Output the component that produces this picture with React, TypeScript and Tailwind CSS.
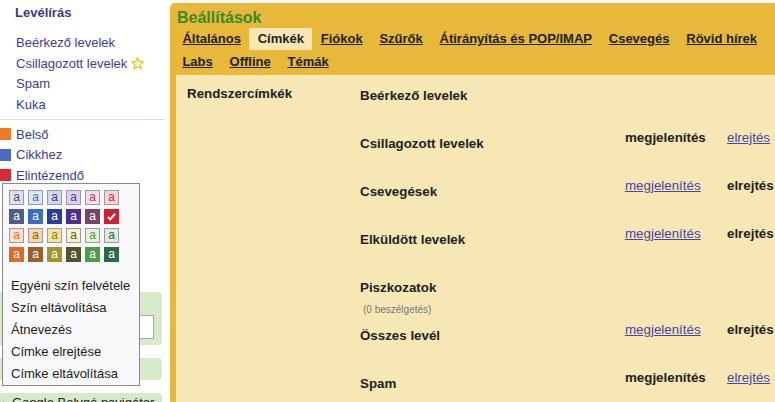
const font = "font-['Liberation_Sans',Arial,sans-serif]";

type Sw = { bg: string; fg: string; light: boolean };

const light = (bg: string, fg: string): Sw => ({ bg, fg, light: true });
const dark = (bg: string): Sw => ({ bg, fg: "#ffffff", light: false });

const palette: Sw[] = [
  light("#dee0f0", "#43509a"),
  light("#dbe6f6", "#3b6ac8"),
  light("#d4d6ee", "#2f3c98"),
  light("#ddd1ef", "#5a3a9c"),
  light("#f5dde6", "#a0405e"),
  light("#f8d6d6", "#cc2a3a"),
  dark("#4d5e8a"),
  dark("#3c6dc6"),
  dark("#2c3d98"),
  dark("#4b2f8c"),
  dark("#764563"),
  dark("#cc2233"),
  light("#fde3cf", "#e3701e"),
  light("#f7d6a9", "#8f5a22"),
  light("#f2e49f", "#8c7a1e"),
  light("#f6f2c8", "#5c5a2a"),
  light("#e3f2d6", "#4a9a3e"),
  light("#dcecd8", "#2e6444"),
  dark("#e2691f"),
  dark("#9b5f2e"),
  dark("#a69232"),
  dark("#50552e"),
  dark("#4e9c4a"),
  dark("#2b6a47"),
];

const menuItems = [
  "Egyéni szín felvétele",
  "Szín eltávolítása",
  "Átnevezés",
  "Címke elrejtése",
  "Címke eltávolítása",
];

const labels = [
  { name: "Belső", color: "#f07a28" },
  { name: "Cikkhez", color: "#4a6cc0" },
  { name: "Elintézendő", color: "#d42a3a" },
];

const tabsRow1 = [
  "Általános",
  "Címkék",
  "Fiókok",
  "Szűrők",
  "Átirányítás és POP/IMAP",
  "Csevegés",
  "Rövid hírek",
];
const tabsRow2 = ["Labs", "Offline", "Témák"];

// show: null = no options, true = shown (bold) / link to hide, false = hidden
const rows: { label: string; sub?: string; show: boolean | null }[] = [
  { label: "Beérkező levelek", show: null },
  { label: "Csillagozott levelek", show: true },
  { label: "Csevegések", show: false },
  { label: "Elküldött levelek", show: false },
  { label: "Piszkozatok", sub: "(0 beszélgetés)", show: null },
  { label: "Összes levél", show: false },
  { label: "Spam", show: true },
];

function Star() {
  return (
    <svg width="15" height="15" viewBox="0 0 24 24" className="ml-[3px] inline-block -mt-[2px]">
      <path
        d="M12 2.5l2.9 6.1 6.6.8-4.9 4.6 1.3 6.6L12 17.3l-5.9 3.3 1.3-6.6-4.9-4.6 6.6-.8z"
        fill="#fff3a0"
        stroke="#e0b020"
        strokeWidth="1.6"
        strokeLinejoin="round"
      />
    </svg>
  );
}

function Tab({ text, active }: { text: string; active?: boolean }) {
  return (
    <div
      className={
        active
          ? "shrink-0 px-[8.4px] h-[22px] leading-[22px] text-[13px] font-bold text-[#222] bg-[#f6e7b5]"
          : "shrink-0 px-[8.4px] h-[22px] leading-[22px] text-[13px] font-bold text-[#222] underline"
      }
    >
      {text}
    </div>
  );
}

function LabelMenu() {
  return (
    <div className="absolute top-[183px] left-[2px] w-[138px] bg-[#f8f8fa] border border-[#8a8a8a] z-10">
      <div className="pt-[6px] pl-[6px] grid grid-cols-[repeat(6,15px)] gap-[4px]">
        {palette.map((s, i) => (
          <div
            key={i}
            className="w-[15px] h-[15px] border flex items-center justify-center text-[12px] leading-none"
            style={{ background: s.bg, color: s.fg, borderColor: s.light ? "#9a9aa4" : s.bg }}
          >
            {i === 11 ? (
              <svg width="11" height="11" viewBox="0 0 12 12">
                <path d="M2 6.5l2.6 2.6L10 3" fill="none" stroke="#fff" strokeWidth="2.2" />
              </svg>
            ) : (
              <span className="-mt-[1px]">a</span>
            )}
          </div>
        ))}
      </div>
      <div className="mt-[13px] pl-[8px]">
        {menuItems.map((m) => (
          <div key={m} className="h-[22px] leading-[22px] text-[13px] text-[#222]">
            {m}
          </div>
        ))}
      </div>
    </div>
  );
}

function Sidebar() {
  return (
    <div className="w-[170px] shrink-0 relative bg-white">
      <div className="pl-[15px] pt-[5px] font-bold text-[#3a3a88] leading-[16px]">Levélírás</div>
      <div className="mt-[12px] pl-[16px] leading-[20.5px] text-[#3c3c9e]">
        <div>Beérkező levelek</div>
        <div>
          Csillagozott levelek
          <Star />
        </div>
        <div>Spam</div>
        <div>Kuka</div>
      </div>
      <div className="mt-[4px] h-px bg-[#d4e3c6] w-[165px]" />
      <div className="mt-[4px]">
        {labels.map((l) => (
          <div key={l.name} className="flex items-center h-[20.5px]">
            <div className="w-[11px] h-[12px]" style={{ background: l.color }} />
            <span className="ml-[5px] text-[#3c3c9e]">{l.name}</span>
          </div>
        ))}
      </div>
      <div className="mt-[106px] h-[53px] w-[162px] bg-[#d4eac8] rounded-r-[4px] pt-[23px]">
        <div className="ml-[8px] w-[146px] h-[24px] bg-white border border-[#a8a8a8]" />
      </div>
      <div className="mt-[13px] h-[22px] w-[162px] bg-[#d4eac8] rounded-r-[4px]" />
      <div className="mt-[13px] h-[30px] w-[162px] bg-[#d4eac8] rounded-r-[4px] flex items-start pt-[2px] pl-[3px] text-[#222] leading-[16px]">
        <span className="text-[9px] mr-[4px]">▸</span>
        <span>Google Bolygó navigátor</span>
      </div>
      <LabelMenu />
    </div>
  );
}

function Options({ show }: { show: boolean | null }) {
  if (show === null) return null;
  return (
    <>
      <div className="w-[102px] shrink-0 pt-[6px] leading-[16px]">
        {show ? (
          <span className="font-bold text-[#222]">megjelenítés</span>
        ) : (
          <span className="text-[#4545a8] underline">megjelenítés</span>
        )}
      </div>
      <div className="pt-[6px] leading-[16px] whitespace-nowrap">
        {show ? (
          <span className="text-[#4545a8] underline">elrejtés</span>
        ) : (
          <span className="font-bold text-[#222]">elrejtés</span>
        )}
      </div>
    </>
  );
}

export default function App() {
  return (
    <div className={`${font} text-[13px] w-[775px] h-[402px] overflow-hidden bg-white flex`}>
      <Sidebar />
      <div className="flex-1 min-w-0 mt-[3px] bg-[#e7b83a] rounded-tl-[5px] flex flex-col overflow-hidden text-[13.33px]">
        <div className="ml-[7px] pt-[5px] leading-[19px] text-[16px] font-bold text-[#3b8a2c]">Beállítások</div>
        <div className="ml-[4px] mt-[1px] flex whitespace-nowrap">
          {tabsRow1.map((t) => (
            <Tab key={t} text={t} active={t === "Címkék"} />
          ))}
        </div>
        <div className="ml-[4px] mt-[1px] flex whitespace-nowrap">
          {tabsRow2.map((t) => (
            <Tab key={t} text={t} />
          ))}
        </div>
        <div className="ml-[6px] mt-[2px] flex-1 bg-[#f6e7b5] pl-[11px] pt-[1px] text-[#222]">
          {rows.map((r, i) => (
            <div key={r.label} className="flex h-[48px]">
              <div className="w-[173px] shrink-0 pt-[10px] leading-[16px] font-bold">
                {i === 0 ? "Rendszercímkék" : ""}
              </div>
              <div className="w-[265px] shrink-0 pt-[12px]">
                <div className="font-bold leading-[16px]">{r.label}</div>
                {r.sub && (
                  <div className="text-[10px] text-[#777] mt-[9px] pl-[3px] leading-none">{r.sub}</div>
                )}
              </div>
              <Options show={r.show} />
            </div>
          ))}
        </div>
      </div>
    </div>
  );
}
